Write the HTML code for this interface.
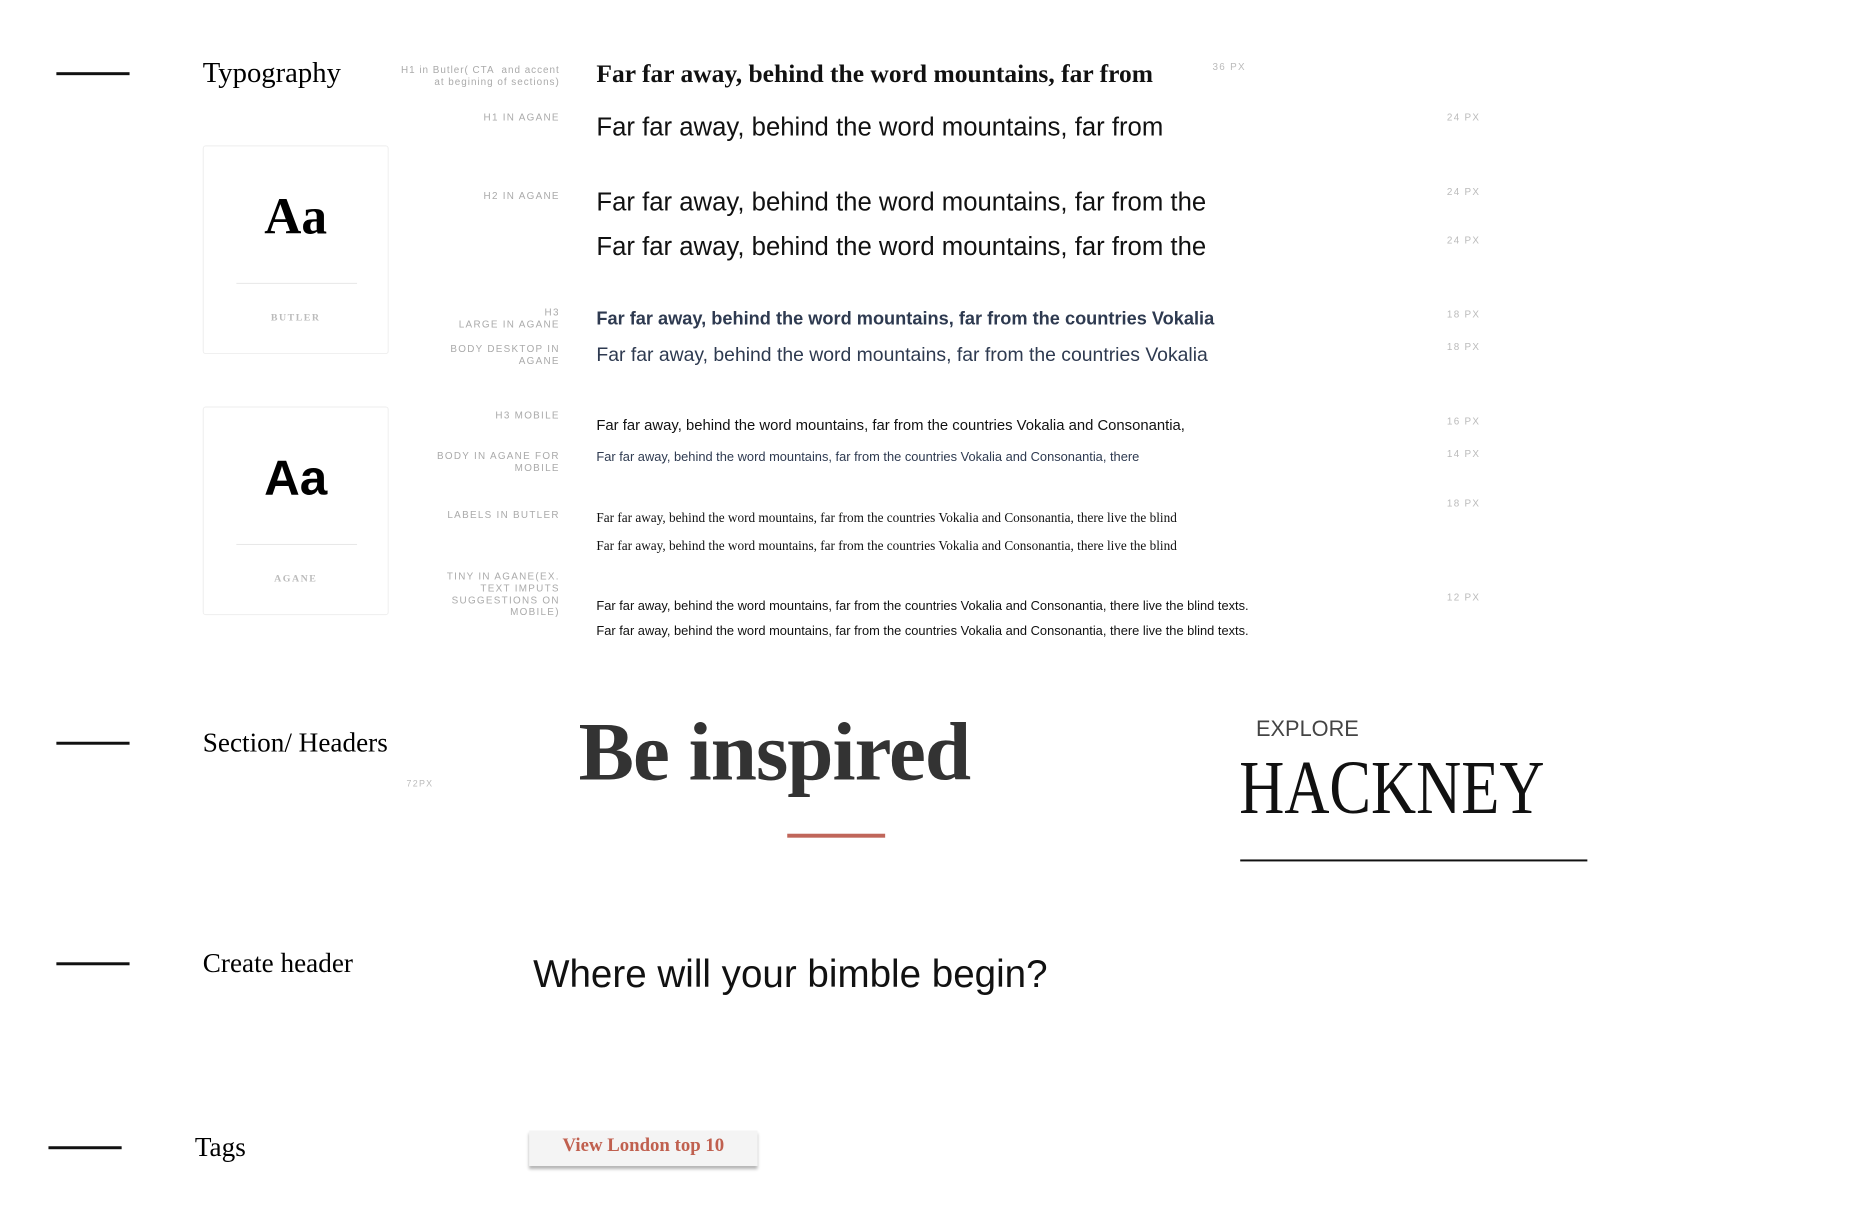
<!DOCTYPE html>
<html><head><meta charset="utf-8"><style>
body{margin:0;width:1850px;height:1207px;background:#fff;position:relative;overflow:hidden;font-family:"Liberation Sans",sans-serif}
#w{position:absolute;left:0;top:0;width:1870px;height:1220px;transform:scale(0.989);transform-origin:0 0}
.a{position:absolute;white-space:nowrap;line-height:1}
.ln{position:absolute;height:3px;background:#111}
.sr{font-family:"Liberation Serif",serif}
.lb{position:absolute;right:1304px;text-align:right;font-size:10px;letter-spacing:1.3px;color:#aaa;line-height:12px;white-space:nowrap}
.px{position:absolute;left:1463px;font-size:10px;letter-spacing:1.3px;color:#bbb;line-height:1}
.card{position:absolute;left:205px;width:188px;height:211px;border:1px solid #eee;border-radius:3px;box-sizing:border-box}
.card .d{position:absolute;left:33px;right:31px;top:138px;height:1px;background:#e6e6e6}
.card .n{position:absolute;width:100%;text-align:center;top:168px;font-family:"Liberation Serif",serif;font-size:10px;font-weight:bold;color:#bbb;letter-spacing:1.5px}
.card .A{position:absolute;width:100%;text-align:center;top:46px;font-size:50px;font-weight:bold;line-height:1}
</style></head><body><div id="w">
<div class="ln" style="left:57px;width:74px;top:73px"></div>
<div class="ln" style="left:57px;width:74px;top:750px"></div>
<div class="ln" style="left:57px;width:74px;top:973px"></div>
<div class="ln" style="left:49px;width:74px;top:1159px"></div>

<div class="a sr" style="left:205px;top:60px;font-size:29px">Typography</div>
<div class="a sr" style="left:205px;top:737px;font-size:27.5px">Section/ Headers</div>
<div class="a sr" style="left:205px;top:960px;font-size:27.5px">Create header</div>
<div class="a sr" style="left:197px;top:1146px;font-size:27.5px">Tags</div>

<div class="card" style="top:147px"><div class="A sr" style="font-size:52px">Aa</div><div class="d"></div><div class="n">BUTLER</div></div>
<div class="card" style="top:411px"><div class="A">Aa</div><div class="d"></div><div class="n">AGANE</div></div>

<div class="lb" style="top:66px;letter-spacing:1px">H1 in Butler( CTA &nbsp;and accent<br>at begining of sections)</div>
<div class="lb" style="top:114px">H1 IN AGANE</div>
<div class="lb" style="top:193px">H2 IN AGANE</div>
<div class="lb" style="top:311px">H3<br>LARGE IN AGANE</div>
<div class="lb" style="top:348px">BODY DESKTOP IN<br>AGANE</div>
<div class="lb" style="top:415px">H3 MOBILE</div>
<div class="lb" style="top:456px">BODY IN AGANE FOR<br>MOBILE</div>
<div class="lb" style="top:516px">LABELS IN BUTLER</div>
<div class="lb" style="top:578px">TINY IN AGANE(EX.<br>TEXT IMPUTS<br>SUGGESTIONS ON<br>MOBILE)</div>

<div class="a sr" style="left:603px;top:62px;font-size:25.8px;font-weight:bold;color:#111">Far far away, behind the word mountains, far from</div>
<div class="a" style="left:603px;top:115px;font-size:26px;color:#111">Far far away, behind the word mountains, far from</div>
<div class="a" style="left:603px;top:191px;font-size:26px;color:#111">Far far away, behind the word mountains, far from the</div>
<div class="a" style="left:603px;top:236px;font-size:26px;color:#111">Far far away, behind the word mountains, far from the</div>
<div class="a" style="left:603px;top:313px;font-size:18.4px;font-weight:bold;color:#2e3a50">Far far away, behind the word mountains, far from the countries Vokalia</div>
<div class="a" style="left:603px;top:350px;font-size:19.6px;color:#2e3a50">Far far away, behind the word mountains, far from the countries Vokalia</div>
<div class="a" style="left:603px;top:423px;font-size:15px;color:#111">Far far away, behind the word mountains, far from the countries Vokalia and Consonantia,</div>
<div class="a" style="left:603px;top:455px;font-size:13px;color:#2e3a50">Far far away, behind the word mountains, far from the countries Vokalia and Consonantia, there</div>
<div class="a sr" style="left:603px;top:517px;font-size:13.4px;color:#111">Far far away, behind the word mountains, far from the countries Vokalia and Consonantia, there live the blind</div>
<div class="a sr" style="left:603px;top:545px;font-size:13.4px;color:#111">Far far away, behind the word mountains, far from the countries Vokalia and Consonantia, there live the blind</div>
<div class="a" style="left:603px;top:606px;font-size:13px;color:#111">Far far away, behind the word mountains, far from the countries Vokalia and Consonantia, there live the blind texts.</div>
<div class="a" style="left:603px;top:631px;font-size:13px;color:#111">Far far away, behind the word mountains, far from the countries Vokalia and Consonantia, there live the blind texts.</div>

<div class="px" style="left:1226px;top:64px">36 PX</div>
<div class="px" style="top:115px">24 PX</div>
<div class="px" style="top:190px">24 PX</div>
<div class="px" style="top:239px">24 PX</div>
<div class="px" style="top:314px">18 PX</div>
<div class="px" style="top:347px">18 PX</div>
<div class="px" style="top:422px">16 PX</div>
<div class="px" style="top:455px">14 PX</div>
<div class="px" style="top:505px">18 PX</div>
<div class="px" style="top:600px">12 PX</div>
<div class="px" style="left:411px;top:788px;font-size:9px">72PX</div>

<div class="a sr" style="left:585px;top:719px;font-size:84px;font-weight:bold;color:#333;letter-spacing:-1px">Be inspired</div>
<div style="position:absolute;left:796px;top:843px;width:99px;height:4px;background:#c0665a"></div>

<div class="a" style="left:1270px;top:726px;font-size:22px;color:#444">EXPLORE</div>
<div class="a sr" style="left:1253px;top:758px;font-size:77px;color:#111;transform:scaleX(0.82);transform-origin:left">HACKNEY</div>
<div style="position:absolute;left:1254px;top:869px;width:351px;height:2px;background:#111"></div>

<div class="a" style="left:539px;top:966px;font-size:39px;color:#111">Where will your bimble begin?</div>

<div style="position:absolute;left:535px;top:1143px;width:231px;height:36px;background:#f4f4f4;box-shadow:0 3px 3px rgba(0,0,0,.3)"></div>
<div class="a sr" style="left:535px;width:231px;text-align:center;top:1149px;font-size:19px;font-weight:bold;color:#c0604f">View London top 10</div>
</div></body></html>
